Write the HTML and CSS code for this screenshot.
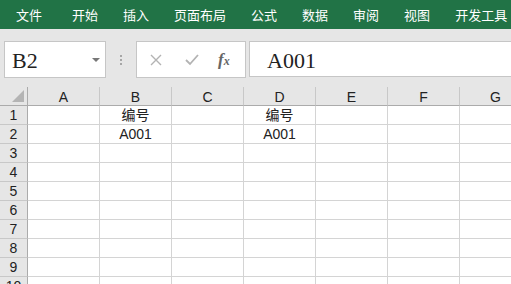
FILE: index.html
```html
<!DOCTYPE html>
<html lang="zh-CN">
<head>
  <meta charset="UTF-8" />
  <title>工作簿1 - Excel</title>
  <link rel="stylesheet" href="styles.css">
</head>
<body>

  <div class="ribbon">
    <span class="tab tab-file">文件</span>
    <span class="tab">开始</span>
    <span class="tab">插入</span>
    <span class="tab">页面布局</span>
    <span class="tab">公式</span>
    <span class="tab">数据</span>
    <span class="tab">审阅</span>
    <span class="tab">视图</span>
    <span class="tab">开发工具</span>
  </div>

  <div class="toolbar">
    <div class="name-box">
      <span class="name-text">B2</span>
      <span class="drop"></span>
    </div>
    <div class="grip">
      <span></span><span></span><span></span>
    </div>
    <div class="func-box">
      <svg class="ico" width="12" height="12" viewBox="0 0 12 12">
        <path d="M1 1 L11 11 M11 1 L1 11" stroke="#b3b3b3" stroke-width="1.4" fill="none" />
      </svg>
      <svg class="ico" width="14" height="12" viewBox="0 0 14 12">
        <path d="M1 6 L5 10 L13 1" stroke="#b3b3b3" stroke-width="1.8" fill="none" />
      </svg>
      <span class="fx">f<small>x</small></span>
    </div>
    <div class="formula">A001</div>
  </div>

  <div class="sheet">
    <div class="corner"><span class="tri"></span></div>
    <div class="col-head">A</div>
    <div class="col-head">B</div>
    <div class="col-head">C</div>
    <div class="col-head">D</div>
    <div class="col-head">E</div>
    <div class="col-head">F</div>
    <div class="col-head">G</div>
  </div>

  <div class="sheet" id="rows"></div>

  <script>
    const rows = document.getElementById("rows");
    const data = {
      1: { B: "编号", D: "编号" },
      2: { B: "A001", D: "A001" }
    };
    const cols = ["A", "B", "C", "D", "E", "F", "G"];

    for (let r = 1; r <= 10; r++) {
      let html = `<div class="row-head">${r}</div>`;
      cols.forEach(c => {
        const val = (data[r] && data[r][c]) || "";
        html += `<div class="cell">${val}</div>`;
      });
      rows.innerHTML += html;
    }
  </script>

</body>
</html>
```

FILE: styles.css
```css
body {
  margin: 0;
  width: 511px;
  height: 284px;
  overflow: hidden;
  background: #e6e6e6;
  font-family: "Liberation Sans", "Noto Sans CJK SC", sans-serif;
}
.ribbon {
  height: 29px;
  background: #217346;
  display: flex;
  align-items: center;
  padding-left: 16px;
  gap: 25px;
}
.tab {
  color: #fff;
  font-family: "Noto Sans CJK SC", sans-serif;
  font-size: 13px;
  line-height: 29px;
}
.tab-file {
  margin-right: 5px;
}
.toolbar {
  height: 58px;
  box-sizing: border-box;
  padding: 12px 0 0 4px;
  display: flex;
  align-items: flex-start;
}
.name-box {
  width: 102px;
  height: 37px;
  box-sizing: border-box;
  background: #fff;
  border: 1px solid #c6c6c6;
  display: flex;
  align-items: center;
  justify-content: space-between;
  padding: 0 5px 0 7px;
}
.name-text {
  font-family: "Liberation Serif", "DejaVu Serif", serif;
  font-size: 22px;
  color: #222;
  padding-top: 3px;
}
.drop {
  width: 0;
  height: 0;
  border-left: 4px solid transparent;
  border-right: 4px solid transparent;
  border-top: 4px solid #777;
  margin-top: 1px;
}
.grip {
  width: 30px;
  height: 37px;
  display: flex;
  flex-direction: column;
  align-items: center;
  justify-content: center;
  gap: 2px;
}
.grip span {
  width: 2px;
  height: 2px;
  background: #a6a6a6;
}
.func-box {
  width: 110px;
  height: 37px;
  box-sizing: border-box;
  background: #fff;
  border: 1px solid #c6c6c6;
  display: flex;
  align-items: center;
  padding-left: 13px;
  gap: 23px;
}
.fx {
  font-family: "Liberation Serif", serif;
  font-style: italic;
  font-weight: bold;
  font-size: 17px;
  color: #666;
  margin-left: -4px;
}
.fx small {
  font-size: 12px;
}
.formula {
  flex: 1;
  height: 36px;
  box-sizing: border-box;
  margin-left: 3px;
  background: #fff;
  border: 1px solid #c6c6c6;
  border-right: none;
  font-family: "Liberation Serif", "DejaVu Serif", serif;
  font-size: 22px;
  color: #222;
  padding: 6px 0 0 17px;
}
.sheet {
  display: grid;
  grid-template-columns: 28px repeat(7, 72px);
  grid-auto-rows: 19px;
}
.corner {
  background: #e6e6e6;
  border-right: 1px solid #ababab;
  border-bottom: 1px solid #ababab;
  position: relative;
}
.tri {
  position: absolute;
  right: 3px;
  bottom: 3px;
  width: 0;
  height: 0;
  border-left: 12px solid transparent;
  border-bottom: 12px solid #b4b4b4;
}
.col-head,
.row-head,
.cell {
  box-sizing: border-box;
  font-size: 14px;
  color: #222;
  text-align: center;
  line-height: 18px;
  white-space: nowrap;
  overflow: hidden;
}
.corner,
.col-head {
  box-sizing: border-box;
}
.col-head {
  background: #e6e6e6;
  border-right: 1px solid #c8c8c8;
  border-bottom: 1px solid #ababab;
  padding-top: 1px;
}
.row-head {
  background: #e6e6e6;
  border-right: 1px solid #ababab;
  border-bottom: 1px solid #c8c8c8;
}
.cell {
  background: #fff;
  border-right: 1px solid #d4d4d4;
  border-bottom: 1px solid #d4d4d4;
}
```
